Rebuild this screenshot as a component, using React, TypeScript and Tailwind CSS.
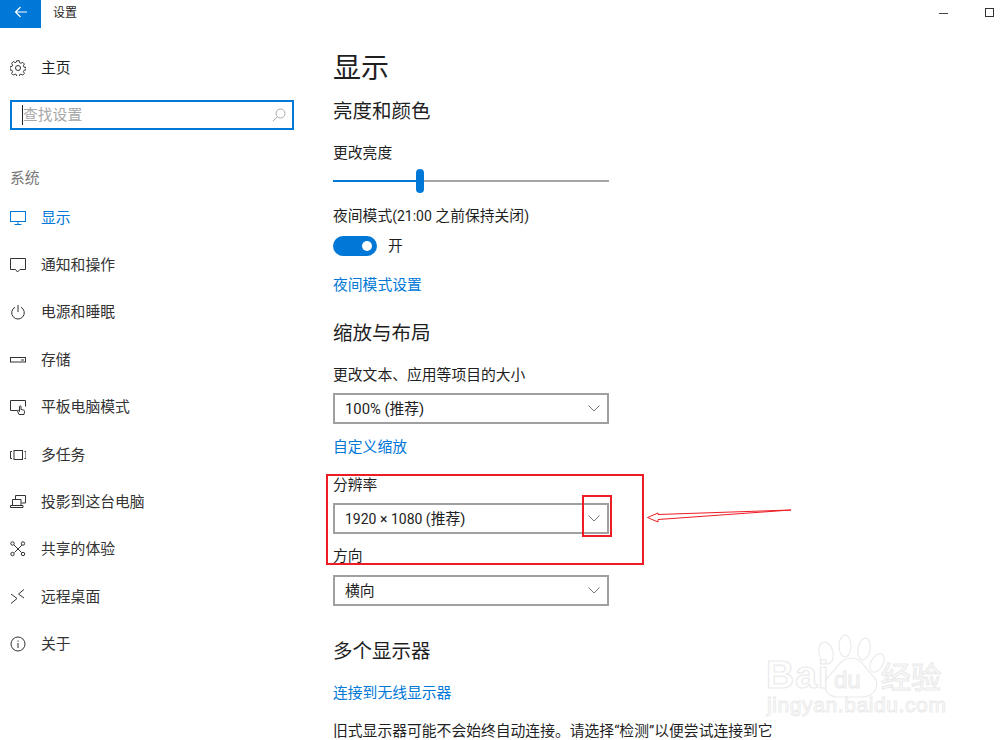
import React from "react";

const S = { fill: "none", stroke: "currentColor", strokeWidth: 1 } as const;
const icons: Record<string, React.ReactNode> = {
  display: <g {...S}><rect x="0.5" y="1.5" width="15" height="10" /><path d="M8 11.5v3M4.5 14.5h7" /></g>,
  notify: <path {...S} d="M.5 1.5h15v11H10L7.5 15 5.5 12.5H.5z" />,
  power: <g {...S}><path d="M8 1v7" /><path d="M5 3.2a6.3 6.3 0 1 0 6 0" /></g>,
  storage: <g {...S}><rect x="0.5" y="5.5" width="15" height="4.5" /><path d="M11 8h3" /></g>,
  tablet: <g {...S}><path d="M7 11.5H.5v-10h15v6" /><path d="M9 15.5 7.5 12c-.3-1 .6-1.2 1.2-.5l.8 1V7.5c0-1 1.5-1 1.5 0v3l2.5.5c1 .2 1.2 1 1 2l-.5 2.5z" fill="#fff" /></g>,
  multi: <g {...S}><rect x="4" y="3.5" width="8.5" height="9" /><path d="M2 4.5H.5v7H2M14.5 4.5H16v7h-1.500" /></g>,
  project: <g {...S}><path d="M5.500 5V1.500h10v7.500h-4" /><path d="M2.500 5.500h8.500v6H2.500zM.5 13.500h12.500v-2H.5z" /></g>,
  share: <g {...S}><circle cx="2.500" cy="2.500" r="1.700" /><circle cx="13" cy="2.500" r="1.700" /><circle cx="2.500" cy="13" r="1.700" /><circle cx="13" cy="13" r="1.700" /><path d="M4 4l7.500 7.500M12 4l-7.500 7.500" /></g>,
  remote: <path {...S} d="M1 5l6 4.500L1 14.500M14 .5 8.500 5l5.500 4" />,
  about: <g {...S}><circle cx="8" cy="8" r="7" /><path d="M8 7v5M8 4.500v1.200" /></g>,
};

function NavIcon({ name }: { name: string }) {
  return <svg width="16" height="16" viewBox="0 0 16 16" className="shrink-0">{icons[name]}</svg>;
}

const nav = [
  ["display", "显示"], ["notify", "通知和操作"], ["power", "电源和睡眠"], ["storage", "存储"],
  ["tablet", "平板电脑模式"], ["multi", "多任务"], ["project", "投影到这台电脑"],
  ["share", "共享的体验"], ["remote", "远程桌面"], ["about", "关于"],
];

function Select({ label, mt }: { label: React.ReactNode; mt: string }) {
  return (
    <div className={`${mt} w-[276px] h-[31px] border-2 border-[#a0a0a0] flex items-center justify-between pl-[10px] pr-[7px] text-[14.8px] text-[#222]`}>
      <span className="leading-5 h-5">{label}</span>
      <svg width="12" height="7" viewBox="0 0 12 7" className="text-[#777]"><path d="M.5.5 6 6 11.500.5" fill="none" stroke="currentColor" /></svg>
    </div>
  );
}

function Gear() {
  return (
    <svg width="16" height="16" viewBox="0 0 16 16" className="shrink-0 text-[#333]">
      <g fill="none" stroke="currentColor">
        <circle cx="8" cy="8" r="2.500" />
        <path d="M6.800.7h2.400l.4 2 1.300.6 1.800-1 1.700 1.700-1 1.800.6 1.300 2 .4v2.400l-2 .4-.6 1.300 1 1.800-1.700 1.700-1.800-1-1.300.6-.4 2H6.800l-.4-2-1.300-.6-1.800 1-1.700-1.700 1-1.800-.6-1.300-2-.4V6.800l2-.4.6-1.300-1-1.800 1.700-1.700 1.800 1 1.300-.6z" />
      </g>
    </svg>
  );
}

export default function App() {
  return (
    <div
      className="relative w-[1000px] h-[740px] overflow-hidden bg-white text-[#1f1f1f]"
      style={{ fontFamily: 'Roboto,"Noto Sans CJK SC",sans-serif' }}
    >
      <header className="h-7 flex items-center">
        <div className="w-[41px] h-7 bg-[#0078d7] flex items-center justify-center text-white">
          <svg width="14" height="12" viewBox="0 0 14 12" className="-mt-[4px]"><path d="M13 6H1.500M6.500 1 1.500 6l5 5" fill="none" stroke="currentColor" strokeWidth="1.200" /></svg>
        </div>
        <span className="ml-3 text-xs -mt-[3px]">设置</span>
        <div className="ml-auto flex items-center pr-[6px] -mt-[3px]">
          <div className="w-[9px] h-px bg-[#444] mr-[37px] mt-px" />
          <div className="w-[9px] h-[9px] border border-[#333]" />
        </div>
      </header>
      <div className="flex">
        <aside className="w-[333px] shrink-0 pl-[10px]">
          <div className="mt-[30px] h-5 flex items-center text-[14.8px]">
            <Gear />
            <span className="ml-[15px] leading-[21px] h-5">主页</span>
          </div>
          <div className="mt-[22px] w-[284px] h-[30px] border-2 border-[#0078d7] flex items-center pl-[10px] pr-[6px] text-[14.8px] text-[#a8a8a8]">
            <div className="w-px h-5 bg-[#222]" />
            <span>查找设置</span>
            <svg width="14" height="14" viewBox="0 0 14 14" className="ml-auto text-[#aaa]"><g fill="none" stroke="currentColor"><circle cx="8.500" cy="5.500" r="4.500" /><path d="M5.300 8.700.8 13.200" /></g></svg>
          </div>
          <div className="mt-[38px] h-5 leading-[20px] text-[14.8px] text-[#777]">系统</div>
          <nav className="mt-[6px]">
            {nav.map(([ic, label], i) => (
              <div key={ic} className={`h-[47.4px] flex items-center text-[14.8px] ${i === 0 ? "text-[#0078d7]" : "text-[#333]"}`}>
                <NavIcon name={ic} />
                <span className="ml-[15px] leading-[20px] h-5">{label}</span>
              </div>
            ))}
          </nav>
        </aside>
        <main className="flex-1 flex flex-col items-start">
          <h1 className="mt-[21px] h-10 leading-10 text-[28px]">显示</h1>
          <h2 className="mt-[9px] h-7 leading-7 text-[19.5px]">亮度和颜色</h2>
          <p className="mt-[17px] h-5 leading-5 text-[14.8px]">更改亮度</p>
          <div className="mt-[6px] relative w-[276px] h-6 flex items-center">
            <div className="w-[83px] h-[2px] bg-[#0078d7]" />
            <div className="flex-1 h-[2px] bg-[#a6a6a6]" />
            <div className="absolute left-[83px] top-0 w-2 h-6 rounded-full bg-[#0078d7]" />
          </div>
          <p className="mt-[13px] h-5 leading-5 text-[14.8px]">夜间模式<span className="text-[14px]">(21:00 </span>之前保持关闭<span className="text-[14px]">)</span></p>
          <div className="mt-[10px] h-5 flex items-center">
            <div className="w-11 h-5 rounded-full bg-[#0078d7] flex items-center justify-end pr-[5px]">
              <div className="w-[10px] h-[10px] rounded-full bg-white" />
            </div>
            <span className="ml-[11px] text-[14.8px]">开</span>
          </div>
          <a className="mt-[19px] h-5 leading-5 text-[14.8px] text-[#0078d7]">夜间模式设置</a>
          <h2 className="mt-[25px] h-7 leading-7 text-[19.5px]">缩放与布局</h2>
          <p className="mt-[17px] h-5 leading-5 text-[14.8px]">更改文本、应用等项目的大小</p>
          <Select label="100% (推荐)" mt="mt-[8px]" />
          <a className="mt-[13px] h-5 leading-5 text-[14.8px] text-[#0078d7]">自定义缩放</a>
          <p className="mt-[18px] h-5 leading-5 text-[14.8px]">分辨率</p>
          <Select label={<><span className="text-sm">1920 × 1080 (</span>推荐)</>} mt="mt-[8px]" />
          <p className="mt-[12px] h-5 leading-5 text-[14.8px]">方向</p>
          <Select label="横向" mt="mt-[9px]" />
          <h2 className="mt-[32px] h-7 leading-7 text-[19.5px]">多个显示器</h2>
          <a className="mt-[17px] h-5 leading-5 text-[14.8px] text-[#0078d7]">连接到无线显示器</a>
          <p className="mt-[18px] h-5 leading-5 text-[14.8px] whitespace-nowrap">旧式显示器可能不会始终自动连接。请选择“检测”以便尝试连接到它</p>
        </main>
      </div>

      {/* annotations drawn over the screenshot */}
      <div className="absolute left-[326px] top-[474px] w-[318px] h-[91px] border-2 border-[#ee1c25]" />
      <div className="absolute left-[582px] top-[495px] w-[30px] h-[42px] border-2 border-[#ee1c25]" />
      <svg className="absolute left-[640px] top-[500px]" width="160" height="30" viewBox="0 0 160 30">
        <path d="M151 10 18 14.500 18 13 7.500 17.500 18 22 18 19.500 z" fill="none" stroke="#ee1c25" strokeWidth="1" />
      </svg>

      {/* watermark */}
      <svg className="absolute left-[760px] top-[625px]" width="195" height="100" viewBox="0 0 195 100">
        <g fill="#fff" stroke="#ebebeb" strokeWidth="1.200">
          <ellipse cx="66" cy="28" rx="7" ry="11" transform="rotate(-15 66 28)" />
          <ellipse cx="85" cy="21" rx="6" ry="11" />
          <ellipse cx="104" cy="24" rx="6" ry="11" transform="rotate(10 104 24)" />
          <ellipse cx="117" cy="38" rx="6" ry="10" transform="rotate(30 117 38)" />
          <path d="M92 33c10 0 14 12 22 19 7 8 0 20-12 20H78c-12 0-17-12-10-20 8-7 12-19 24-19z" />
          <text x="6" y="63" fontSize="39" fontFamily="Liberation Sans, sans-serif" fontWeight="700" fill="#fff" letterSpacing="1">Bai</text>
          <text x="74" y="63" fontSize="24" fontFamily="Liberation Sans, sans-serif" fill="#fff">du</text>
          <text x="121" y="63" fontSize="30" fontFamily="Noto Sans CJK SC, sans-serif" fill="#fff">经验</text>
        </g>
        <text x="7" y="87" fontSize="21" fontFamily="Liberation Sans, sans-serif" fill="#fff" stroke="#ebebeb" letterSpacing=".6">jingyan.baidu.com</text>
      </svg>
    </div>
  );
}
